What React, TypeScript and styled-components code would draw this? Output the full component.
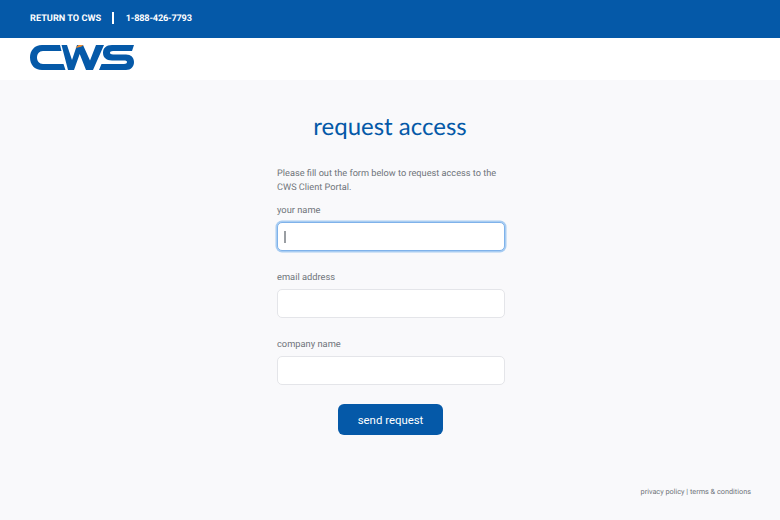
import styled, { createGlobalStyle } from 'styled-components';

const GlobalStyle = createGlobalStyle`
  html, body {
    margin: 0;
    padding: 0;
  }

  body {
    background: #f9f9fb;
    font-family: Roboto, 'Open Sans', sans-serif;
    text-rendering: geometricPrecision;
  }

  * {
    box-sizing: border-box;
  }
`;

const fields = [
  { id: 'name', label: 'your name', focused: true },
  { id: 'email', label: 'email address', focused: false },
  { id: 'company', label: 'company name', focused: false },
];

function Logo() {
  return (
    <svg width="104" height="25" viewBox="0 0 104 25" aria-label="CWS logo">
      <path
        fill="#0559a8"
        d="M12 0H30L31.500 6H13C9 6 7 9 7 12.500S9 19 13 19H33.500L35.500 25H12C4.500 25 0 19.500 0 12.500S4.500 0 12 0Z"
      />
      <path
        fill="#0559a8"
        d="M31.500 0H37L42 15L47 0H53L60 15.500L66 0H74L63 25H56L49.700 9L44 25H38Z"
      />
      <path
        fill="#0559a8"
        d="M82 0H104L102 6H83C81 6 80 6.800 80 7.800S81 9.500 83 9.500H96C101 9.500 104 12.500 104 17S101 25 96 25H69L71.500 19H94C96 19 97 18 97 17S96 15.500 94 15.500H82C76 15.500 73 12.500 73 7.800S76 0 82 0Z"
      />
      <path fill="#ee8a2c" d="M45.500 3L48.500 0H53.500L51 1.800Z" />
    </svg>
  );
}

export default function App() {
  return (
    <Page>
      <GlobalStyle />
      <TopBar>
        <TopLink>RETURN TO CWS</TopLink>
        <Divider />
        <TopLink $tight>1-888-426-7793</TopLink>
      </TopBar>
      <LogoBar>
        <Logo />
      </LogoBar>
      <Main>
        <Title>request access</Title>
        <Form>
          <Intro>Please fill out the form below to request access to the CWS Client Portal.</Intro>
          {fields.map((field) => (
            <Field key={field.id}>
              <Label htmlFor={field.id}>{field.label}</Label>
              <InputWrap>
                <Input id={field.id} type="text" $focused={field.focused} />
                {field.focused && <Caret />}
              </InputWrap>
            </Field>
          ))}
          <SendButton type="button">send request</SendButton>
        </Form>
      </Main>
      <Footer>privacy policy | terms &amp; conditions</Footer>
    </Page>
  );
}

const Page = styled.div`
  display: flex;
  flex-direction: column;
  width: 780px;
  height: 520px;
  overflow: hidden;
  background: #f9f9fb;
`;

const TopBar = styled.header`
  display: flex;
  align-items: center;
  height: 38px;
  padding: 0 0 2px 30px;
  background: #0559a8;
`;

const TopLink = styled.a<{ $tight?: boolean }>`
  font-size: 9.2px;
  font-weight: 700;
  letter-spacing: ${(p) => (p.$tight ? '-0.2px' : '0')};
  color: #fff;
`;

const Divider = styled.span`
  width: 1.5px;
  height: 12px;
  margin: 0 12px 0 11px;
  background: #fff;
`;

const LogoBar = styled.div`
  display: flex;
  height: 42px;
  padding: 7px 0 0 30px;
  background: #fff;
`;

const Main = styled.main`
  display: flex;
  flex: 1;
  flex-direction: column;
  align-items: center;
  padding-top: 31px;
`;

const Title = styled.h1`
  margin: 0;
  font-family: Lato, Roboto, sans-serif;
  font-size: 24px;
  font-weight: 400;
  line-height: 32px;
  color: #0559a8;
`;

const Form = styled.form`
  display: flex;
  flex-direction: column;
  width: 228px;
  margin-top: 24px;
  margin-left: 2px;
`;

const Intro = styled.p`
  margin: 0;
  font-size: 9.2px;
  line-height: 14px;
  color: #6f747a;
`;

const Field = styled.div`
  display: flex;
  flex-direction: column;
  margin-top: 9px;
  margin-bottom: 11px;
`;

const Label = styled.label`
  margin-bottom: 4px;
  font-size: 9.3px;
  line-height: 14px;
  color: #6f747a;
`;

const InputWrap = styled.div`
  position: relative;
`;

const Input = styled.input<{ $focused: boolean }>`
  display: block;
  width: 100%;
  height: 29px;
  background: #fff;
  border: ${(p) => (p.$focused ? '1px solid #7fb2ea' : '1.5px solid #e4e5e9')};
  border-radius: 5px;
  outline: none;
  box-shadow: ${(p) => (p.$focused ? '0 0 0 1.5px #a9cdf2' : 'none')};
`;

const Caret = styled.span`
  position: absolute;
  top: 9px;
  left: 7px;
  width: 1.5px;
  height: 12px;
  background: #9a9ea3;
`;

const SendButton = styled.button`
  align-self: center;
  width: 105px;
  height: 31px;
  margin: 8px 1px 0 0;
  padding: 0;
  font-family: inherit;
  font-size: 11.4px;
  color: #fff;
  background: #0559a8;
  border: none;
  border-radius: 6px;
`;

const Footer = styled.footer`
  align-self: flex-end;
  padding: 0 29px 22px 0;
  font-size: 7.3px;
  line-height: 12px;
  color: #6f747a;
`;
